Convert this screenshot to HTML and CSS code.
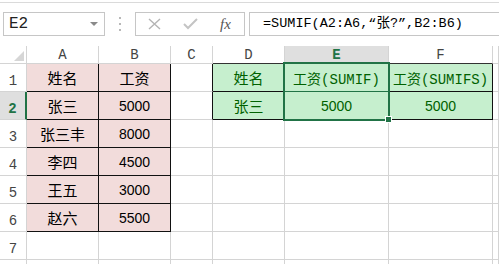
FILE: index.html
```html
<!DOCTYPE html>
<html lang="zh-CN">

<head>
    <meta charset="UTF-8">
    <title>SUMIF</title>
    <link rel="stylesheet" href="styles.css">
</head>

<body>
    <div class="topline"></div>
    <div class="formula-bar">
        <div class="name-box">
            <span>E2</span>
            <span class="caret"></span>
        </div>
        <div class="grip">
            <svg width="3" height="14" viewBox="0 0 3 14">
                <rect x="0" y="0" width="2" height="2" fill="#b8b8b8" />
                <rect x="0" y="6" width="2" height="2" fill="#b8b8b8" />
                <rect x="0" y="12" width="2" height="2" fill="#b8b8b8" />
            </svg>
        </div>
        <div class="fx-buttons">
            <svg width="108" height="22" viewBox="0 0 108 22">
                <path d="M13 6 L24 16 M24 6 L13 16" stroke="#b4b4b4" stroke-width="1.4" fill="none" />
                <path d="M48 11 L52 15 L61 6" stroke="#c4c4c4" stroke-width="2" fill="none" />
                <text x="84" y="16" class="fx">fx</text>
            </svg>
        </div>
        <div class="formula">=SUMIF(A2:A6,“张?”,B2:B6)</div>
    </div>

    <div class="sheet">
        <div class="cell corner"><span class="tri"></span></div>
        <div class="cell hdr">A</div>
        <div class="cell hdr">B</div>
        <div class="cell hdr">C</div>
        <div class="cell hdr dark-b">D</div>
        <div class="cell hdr active-col">E</div>
        <div class="cell hdr dark-b">F</div>
        <div class="cell hdr"></div>

        <div class="cell rh">1</div>
        <div class="cell pink">姓名</div>
        <div class="cell pink">工资</div>
        <div class="cell dark-r"></div>
        <div class="cell green">姓名</div>
        <div class="cell green mono e1">工资(SUMIF)</div>
        <div class="cell green mono">工资(SUMIFS)</div>
        <div class="cell"></div>

        <div class="cell rh active-row">2</div>
        <div class="cell pink">张三</div>
        <div class="cell pink num">5000</div>
        <div class="cell dark-r"></div>
        <div class="cell green">张三</div>
        <div class="cell green num">5000</div>
        <div class="cell green num">5000</div>
        <div class="cell"></div>

        <div class="cell rh">3</div>
        <div class="cell pink">张三丰</div>
        <div class="cell pink num">8000</div>
        <div class="cell"></div>
        <div class="cell"></div>
        <div class="cell"></div>
        <div class="cell"></div>
        <div class="cell"></div>

        <div class="cell rh">4</div>
        <div class="cell pink">李四</div>
        <div class="cell pink num">4500</div>
        <div class="cell"></div>
        <div class="cell"></div>
        <div class="cell"></div>
        <div class="cell"></div>
        <div class="cell"></div>

        <div class="cell rh">5</div>
        <div class="cell pink">王五</div>
        <div class="cell pink num">3000</div>
        <div class="cell"></div>
        <div class="cell"></div>
        <div class="cell"></div>
        <div class="cell"></div>
        <div class="cell"></div>

        <div class="cell rh">6</div>
        <div class="cell pink">赵六</div>
        <div class="cell pink num">5500</div>
        <div class="cell"></div>
        <div class="cell"></div>
        <div class="cell"></div>
        <div class="cell"></div>
        <div class="cell"></div>

        <div class="cell rh">7</div>
        <div class="cell"></div>
        <div class="cell"></div>
        <div class="cell"></div>
        <div class="cell"></div>
        <div class="cell"></div>
        <div class="cell"></div>
        <div class="cell"></div>

        <div class="cell rh"></div>
        <div class="cell"></div>
        <div class="cell"></div>
        <div class="cell"></div>
        <div class="cell"></div>
        <div class="cell"></div>
        <div class="cell"></div>
        <div class="cell"></div>

        <div class="selection"><span class="handle"></span></div>
    </div>
</body>

</html>
```

FILE: styles.css
```css
body {
    margin: 0px;
    overflow: hidden;
    background: #fff;
    font-family: "Liberation Mono", "Noto Sans CJK SC", monospace;
    color: #000;
}

.topline {
    margin-top: 2px;
    border-top: 1px solid #dadada;
}

/* formula bar */
.formula-bar {
    display: flex;
    height: 24px;
    margin-top: 9px;
}

.name-box {
    display: flex;
    align-items: center;
    box-sizing: border-box;
    width: 102px;
    margin-left: 3px;
    padding-left: 5px;
    border: 1px solid #c6c6c6;
    font-size: 16px;
    color: #222;
}

.name-box .caret {
    margin-left: auto;
    margin-right: 6px;
    border-left: 4px solid transparent;
    border-right: 4px solid transparent;
    border-top: 4px solid #8a8a8a;
}

.grip {
    display: flex;
    align-items: center;
    justify-content: center;
    width: 30px;
}

.fx-buttons {
    box-sizing: border-box;
    width: 110px;
    border: 1px solid #c6c6c6;
}

.fx-buttons svg {
    display: block;
}

.fx {
    font-family: "Liberation Serif", serif;
    font-style: italic;
    font-size: 15px;
    fill: #555;
}

.formula {
    flex: 1;
    margin-left: 4px;
    margin-right: -2px;
    padding-left: 13px;
    border: 1px solid #c6c6c6;
    font-size: 13.5px;
    line-height: 22px;
    white-space: nowrap;
}

/* sheet grid */
.sheet {
    position: relative;
    display: grid;
    grid-template-columns: 27px 72px 72px 42px 72px 104px 104px 1fr;
    grid-template-rows: 18px repeat(8, 28px);
    margin-top: 10px;
}

.cell {
    display: flex;
    align-items: center;
    justify-content: center;
    box-sizing: border-box;
    border-right: 1px solid #d4d4d4;
    border-bottom: 1px solid #d4d4d4;
    font-family: "Noto Sans CJK SC", sans-serif;
    font-size: 15px;
    white-space: nowrap;
}

.corner {
    justify-content: flex-end;
    align-items: flex-end;
    padding: 0 2px 2px 0;
}

.corner .tri {
    border-left: 10px solid transparent;
    border-bottom: 10px solid #d6d6d6;
}

.hdr {
    font-family: "Liberation Mono", monospace;
    font-size: 14px;
    color: #444;
    padding-top: 1px;
}

.hdr.dark-b {
    border-bottom-color: #333;
}

.hdr.active-col {
    background: #dfdfdf;
    border-bottom: 2px solid #217346;
    color: #217346;
    font-weight: bold;
}

.rh {
    align-items: flex-end;
    padding-bottom: 3px;
    font-family: "Liberation Mono", monospace;
    font-size: 14px;
    line-height: 14px;
    color: #444;
}

.rh.active-row {
    background: #dfdfdf;
    border-right: 2px solid #217346;
    color: #217346;
    font-weight: bold;
}

.pink {
    background: #f2dcdb;
    border-right-color: #111;
    border-bottom-color: #111;
}

.green {
    background: #c6efce;
    color: #006100;
    border-right-color: #111;
    border-bottom-color: #111;
}

.green.e1 {
    border-bottom-color: #217346;
}

.dark-r {
    border-right-color: #111;
}

.mono {
    font-family: "Liberation Mono", "Noto Sans CJK SC", monospace;
    font-size: 14px;
}

.num {
    font-family: "Liberation Sans", sans-serif;
    font-size: 14px;
}

.selection {
    position: absolute;
    left: 283px;
    top: 16px;
    width: 107px;
    height: 59px;
    box-sizing: border-box;
    border: 2px solid #217346;
}

.selection .handle {
    position: absolute;
    right: -4px;
    bottom: -4px;
    width: 5px;
    height: 5px;
    background: #217346;
    border: 1px solid #fff;
}
```
